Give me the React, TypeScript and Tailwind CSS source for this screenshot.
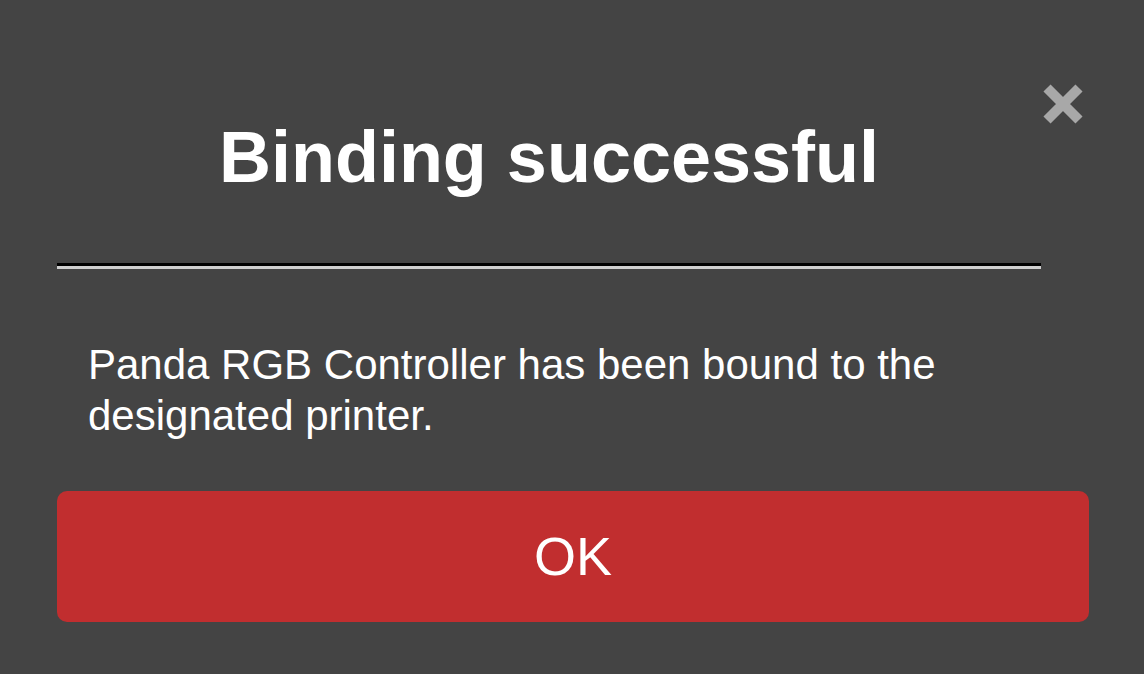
export default function App() {
  return (
    <div
      className="relative h-[674px] w-full overflow-hidden bg-[#444444] text-white"
      style={{ fontFamily: '"Liberation Sans", Arial, sans-serif' }}
    >
      <button className="absolute left-[1043px] top-[84px] h-[40px] w-[40px]" aria-label="Close">
        <svg viewBox="0 0 40 40" className="h-[40px] w-[40px]">
          <path d="M4 4 L36 36 M36 4 L4 36" stroke="#a8a8a8" strokeWidth="10" strokeLinecap="butt" />
        </svg>
      </button>

      <div className="flex flex-col pl-[57px] pr-[55px] pt-[117px]">
        <div className="mr-[48px]">
          <h1 className="text-center text-[72px] font-bold leading-[80px]">Binding successful</h1>
          <div className="mt-[66px] h-[6px] border-t-[3px] border-b-[3px] border-t-black border-b-[#cfcfcf]" />
        </div>

        <p className="mt-[70px] pl-[31px] text-[42px] leading-[51px]">
          Panda RGB Controller has been bound to the
          <br />
          designated printer.
        </p>

        <button className="mt-[50px] flex h-[131px] w-full items-center justify-center rounded-[10px] bg-[#c12e2f] text-[54px] text-white">
          OK
        </button>
      </div>
    </div>
  );
}
